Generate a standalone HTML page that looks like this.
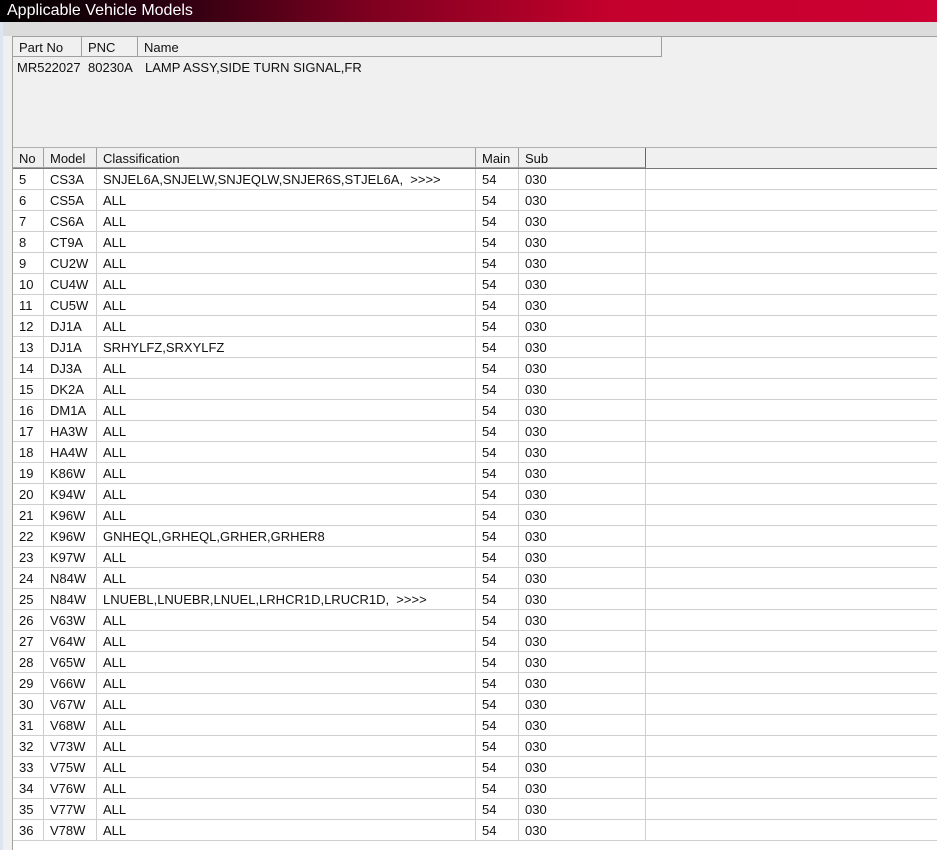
<!DOCTYPE html>
<html><head><meta charset="utf-8"><style>
*{margin:0;padding:0;box-sizing:border-box}
body{width:937px;height:850px;overflow:hidden;background:#f0f0f0;font-family:"Liberation Sans",Arial,sans-serif;font-size:13px;color:#111;position:relative}
.title{position:absolute;left:0;top:0;width:937px;height:22px;background:linear-gradient(90deg,#000 0%,#2a0010 18%,#800020 40%,#c4002c 65%,#cc0033 100%);color:#fff;font-size:16px;line-height:22px;padding-left:7px}
.strip{position:absolute;left:0;top:22px;width:937px;height:14px;background:#dcdcdc}
.edge{position:absolute;left:0;top:22px;width:3px;height:828px;background:#dde6f0}
.box{position:absolute;left:12px;top:36px;width:925px;height:814px;border-top:1px solid #a0a0a0;border-left:1px solid #a0a0a0;background:#f0f0f0}
.a{position:absolute;white-space:nowrap}
.hc{position:absolute;height:20px;line-height:21px;padding-left:6px;border-right:1px solid #a0a0a0;border-bottom:1px solid #a0a0a0;background:#f0f0f0}
.body{position:absolute;left:13px;top:168px;width:924px;height:682px;background:#fff;border-top:1px solid #777}
.row{position:absolute;left:0;width:924px;height:21px;border-bottom:1px solid #cfcfcf}
.c{position:absolute;top:0;height:21px;line-height:22px;padding-left:6px;border-right:1px solid #cfcfcf;white-space:nowrap}
</style></head><body>
<div class="title">Applicable Vehicle Models</div>
<div class="strip"></div>
<div class="edge"></div>
<div class="box"></div>
<div class="hc" style="left:13px;top:37px;width:69px">Part No</div>
<div class="hc" style="left:82px;top:37px;width:56px">PNC</div>
<div class="hc" style="left:138px;top:37px;width:524px">Name</div>
<div class="a" style="left:17px;top:60px">MR522027</div>
<div class="a" style="left:88px;top:60px">80230A</div>
<div class="a" style="left:145px;top:60px">LAMP ASSY,SIDE TURN SIGNAL,FR</div>
<div style="position:absolute;left:13px;top:147px;width:924px;height:1px;background:#b0b0b0"></div>
<div class="hc" style="left:13px;top:148px;width:31px">No</div>
<div class="hc" style="left:44px;top:148px;width:53px">Model</div>
<div class="hc" style="left:97px;top:148px;width:379px">Classification</div>
<div class="hc" style="left:476px;top:148px;width:43px">Main</div>
<div class="hc" style="left:519px;top:148px;width:127px;border-right:1px solid #666">Sub</div>
<div class="body" id="b">
</div>
<script>
var d=[[5,"CS3A","SNJEL6A,SNJELW,SNJEQLW,SNJER6S,STJEL6A,&nbsp;&nbsp;&gt;&gt;&gt;&gt;"],[6,"CS5A","ALL"],[7,"CS6A","ALL"],[8,"CT9A","ALL"],[9,"CU2W","ALL"],[10,"CU4W","ALL"],[11,"CU5W","ALL"],[12,"DJ1A","ALL"],[13,"DJ1A","SRHYLFZ,SRXYLFZ"],[14,"DJ3A","ALL"],[15,"DK2A","ALL"],[16,"DM1A","ALL"],[17,"HA3W","ALL"],[18,"HA4W","ALL"],[19,"K86W","ALL"],[20,"K94W","ALL"],[21,"K96W","ALL"],[22,"K96W","GNHEQL,GRHEQL,GRHER,GRHER8"],[23,"K97W","ALL"],[24,"N84W","ALL"],[25,"N84W","LNUEBL,LNUEBR,LNUEL,LRHCR1D,LRUCR1D,&nbsp;&nbsp;&gt;&gt;&gt;&gt;"],[26,"V63W","ALL"],[27,"V64W","ALL"],[28,"V65W","ALL"],[29,"V66W","ALL"],[30,"V67W","ALL"],[31,"V68W","ALL"],[32,"V73W","ALL"],[33,"V75W","ALL"],[34,"V76W","ALL"],[35,"V77W","ALL"],[36,"V78W","ALL"]];
var h="";
d.forEach(function(r,i){h+='<div class="row" style="top:'+(i*21)+'px"><div class="c" style="left:0;width:31px">'+r[0]+'</div><div class="c" style="left:31px;width:53px">'+r[1]+'</div><div class="c" style="left:84px;width:379px">'+r[2]+'</div><div class="c" style="left:463px;width:43px">54</div><div class="c" style="left:506px;width:127px">030</div></div>';});
document.getElementById("b").innerHTML=h;
</script>
</body></html>
